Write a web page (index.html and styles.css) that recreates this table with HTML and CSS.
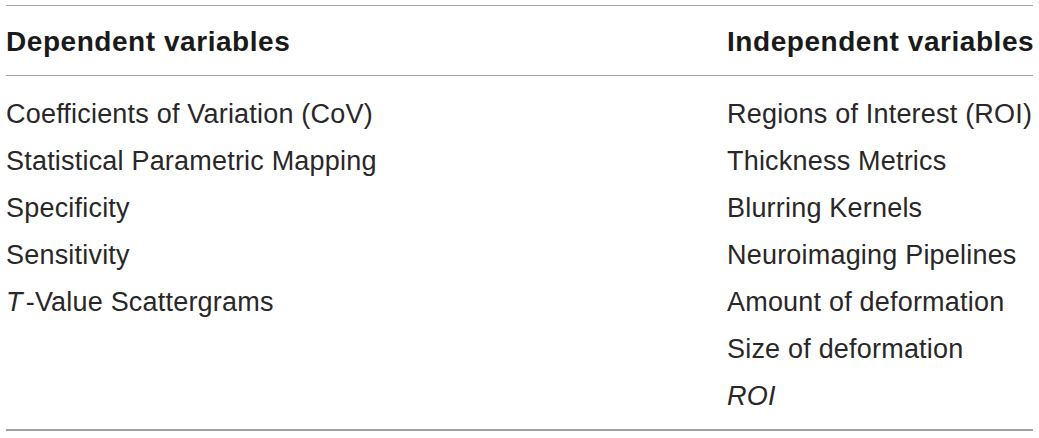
FILE: index.html
```html
<!DOCTYPE html>
<html>
<head>
<meta charset="utf-8">
<link rel="stylesheet" href="styles.css">
</head>
<body>
<div class="table">
  <div class="head">
    <div class="th">Dependent variables</div>
    <div class="th">Independent variables</div>
  </div>
  <div class="body">
    <div class="col left">
      <div class="cell">Coefficients of Variation (CoV)</div>
      <div class="cell">Statistical Parametric Mapping</div>
      <div class="cell">Specificity</div>
      <div class="cell">Sensitivity</div>
      <div class="cell"><i class="t">T</i>-Value Scattergrams</div>
    </div>
    <div class="col right">
      <div class="cell">Regions of Interest (ROI)</div>
      <div class="cell">Thickness Metrics</div>
      <div class="cell">Blurring Kernels</div>
      <div class="cell">Neuroimaging Pipelines</div>
      <div class="cell">Amount of deformation</div>
      <div class="cell">Size of deformation</div>
      <div class="cell"><i>ROI</i></div>
    </div>
  </div>
</div>
</body>
</html>
```

FILE: styles.css
```css
html, body {
  margin: 0;
  padding: 0;
  background: #fff;
}
body {
  font-family: "Liberation Sans", Arial, sans-serif;
  color: #2a2728;
}
.table {
  margin: 5px 0 0 6px;
  width: 1027px;
  border-top: 1px solid #a0a0a0;
  border-bottom: 2px solid #a0a0a0;
}
.head {
  display: grid;
  grid-template-columns: 721px 1fr;
  height: 70px;
  align-items: center;
  border-bottom: 1px solid #a0a0a0;
  padding-top: 2px;
  box-sizing: border-box;
}
.th {
  font-weight: bold;
  font-size: 28px;
  letter-spacing: 0.55px;
  color: #1a1a1a;
  white-space: nowrap;
}
.body {
  display: grid;
  grid-template-columns: 721px 1fr;
  padding: 15px 0 9px;
}
.cell {
  font-size: 27px;
  line-height: 47px;
  height: 47px;
  letter-spacing: 0.2px;
  white-space: nowrap;
}
.t {
  margin-right: 3px;
}
```
